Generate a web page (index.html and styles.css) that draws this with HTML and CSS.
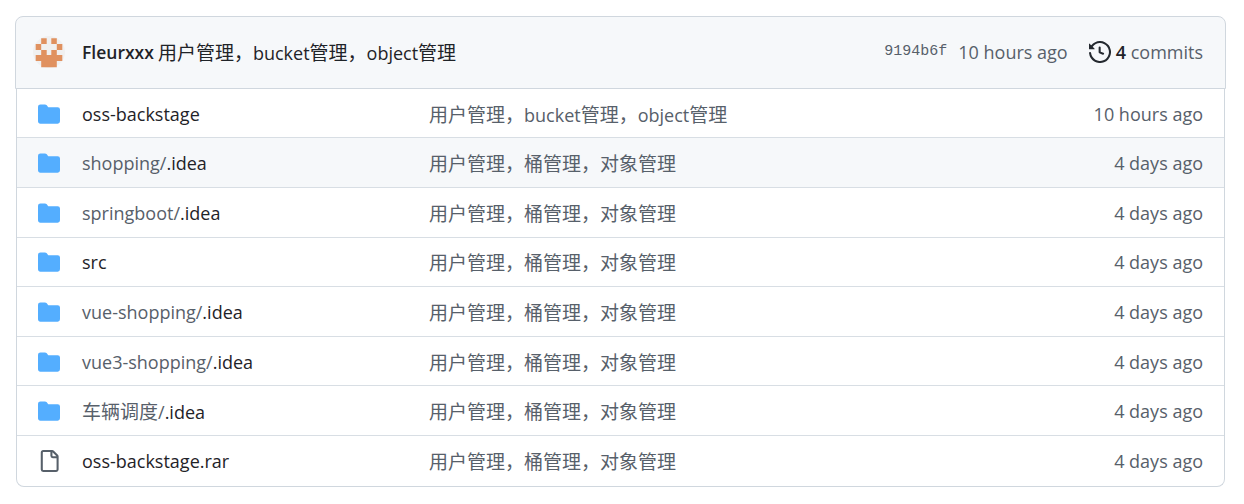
FILE: index.html
```html
<!DOCTYPE html>
<html>
<head>
	<meta charset="utf-8">
	<title>Repositorio</title>
	<link rel="stylesheet" href="styles.css">
</head>
<body>
	<svg class="defs" width="0" height="0">
		<symbol id="folder" viewBox="0 0 16 16"><path d="M1.75 1A1.75 1.75 0 0 0 0 2.75v10.5C0 14.216.784 15 1.75 15h12.5A1.75 1.75 0 0 0 16 13.25v-8.5A1.75 1.75 0 0 0 14.25 3H7.5a.25.25 0 0 1-.2-.1l-.9-1.2C6.07 1.26 5.55 1 5 1H1.75Z"/></symbol>
		<symbol id="file" viewBox="0 0 16 16"><path d="M2 1.75C2 .784 2.784 0 3.75 0h6.586c.464 0 .909.184 1.237.513l2.914 2.914c.329.328.513.773.513 1.237v9.586A1.75 1.75 0 0 1 13.25 16h-9.5A1.75 1.75 0 0 1 2 14.25Zm1.75-.25a.25.25 0 0 0-.25.25v12.5c0 .138.112.25.25.25h9.5a.25.25 0 0 0 .25-.25V6h-2.75A1.75 1.75 0 0 1 9 4.25V1.5Zm6.75.062V4.25c0 .138.112.25.25.25h2.688l-.011-.013-2.914-2.914-.013-.011Z"/></symbol>
	</svg>

	<div class="box">
		<div class="box-header">
			<svg class="avatar" width="32" height="32" viewBox="0 0 32 32">
				<circle cx="16" cy="16" r="16" fill="#f0f0f0"/>
				<path fill="#e0915f" d="M8.2 2.3h5.5v5.8H8.2zM18.3 2.3h5.5v5.8h-5.5zM2.7 8.1h5.5v5.8H2.7zM23.8 8.1h5.5v5.8h-5.5zM8.2 13.9h5.5v5.8H8.2zM18.3 13.9h5.5v5.8h-5.5zM2.7 19h26.6v6H2.7zM8.2 25h15.6v6.2H8.2z"/>
			</svg>
			<a class="author">Fleurxxx</a>
			<span class="message"><span class="zh">用户管理，</span>bucket<span class="zh">管理，</span>object<span class="zh">管理</span></span>
			<code class="sha">9194b6f</code>
			<span class="age">10 hours ago</span>
			<span class="commits">
				<svg width="22" height="22" viewBox="0 0 16 16"><path d="m.427 1.927 1.215 1.215a8.002 8.002 0 1 1-1.6 5.685.75.75 0 1 1 1.493-.154 6.5 6.5 0 1 0 1.18-4.458l1.358 1.358A.25.25 0 0 1 3.896 6H.25A.25.25 0 0 1 0 5.75V2.104a.25.25 0 0 1 .427-.177ZM7.75 4a.75.75 0 0 1 .75.75v2.992l2.028.812a.75.75 0 0 1-.557 1.392l-2.5-1A.751.751 0 0 1 7 8.25v-3.5A.75.75 0 0 1 7.75 4Z"/></svg>
				<span><b>4</b> commits</span>
			</span>
		</div>
		<div class="rows">
			<div class="row">
				<svg class="ico folder"><use href="#folder"/></svg>
				<span class="name">oss-backstage</span>
				<span class="msg"><span class="zh">用户管理，</span>bucket<span class="zh">管理，</span>object<span class="zh">管理</span></span>
				<span class="time">10 hours ago</span>
			</div>
			<div class="row hover">
				<svg class="ico folder"><use href="#folder"/></svg>
				<span class="name"><span class="muted">shopping/</span>.idea</span>
				<span class="msg zh">用户管理，桶管理，对象管理</span>
				<span class="time">4 days ago</span>
			</div>
			<div class="row">
				<svg class="ico folder"><use href="#folder"/></svg>
				<span class="name"><span class="muted">springboot/</span>.idea</span>
				<span class="msg zh">用户管理，桶管理，对象管理</span>
				<span class="time">4 days ago</span>
			</div>
			<div class="row">
				<svg class="ico folder"><use href="#folder"/></svg>
				<span class="name">src</span>
				<span class="msg zh">用户管理，桶管理，对象管理</span>
				<span class="time">4 days ago</span>
			</div>
			<div class="row">
				<svg class="ico folder"><use href="#folder"/></svg>
				<span class="name"><span class="muted">vue-shopping/</span>.idea</span>
				<span class="msg zh">用户管理，桶管理，对象管理</span>
				<span class="time">4 days ago</span>
			</div>
			<div class="row">
				<svg class="ico folder"><use href="#folder"/></svg>
				<span class="name"><span class="muted">vue3-shopping/</span>.idea</span>
				<span class="msg zh">用户管理，桶管理，对象管理</span>
				<span class="time">4 days ago</span>
			</div>
			<div class="row">
				<svg class="ico folder"><use href="#folder"/></svg>
				<span class="name"><span class="muted"><span class="zh">车辆调度</span>/</span>.idea</span>
				<span class="msg zh">用户管理，桶管理，对象管理</span>
				<span class="time">4 days ago</span>
			</div>
			<div class="row">
				<svg class="ico file"><use href="#file"/></svg>
				<span class="name">oss-backstage.rar</span>
				<span class="msg zh">用户管理，桶管理，对象管理</span>
				<span class="time">4 days ago</span>
			</div>
		</div>
	</div>
</body>
</html>
```
FILE: styles.css
```css
body{
	margin: 0;
	padding: 16px 18px 17px 15px;
	background: #fff;
	font-family: 'Open Sans', 'Noto Sans CJK SC', sans-serif;
	font-size: 18px;
	color: #1f2328;
}
.defs{
	display: block;
}
.zh{
	font-size: 19px;
}
/*--------Cabecera-----------*/
.box-header{
	display: flex;
	align-items: center;
	height: 73px;
	box-sizing: border-box;
	padding: 0 22px 2px 17px;
	background: #f6f8fa;
	border: 1px solid #d0d7de;
	border-radius: 8px 8px 0 0;
}
.avatar{
	margin-right: 17px;
}
.author{
	font-weight: 600;
	font-size: 17.5px;
	margin-right: 4px;
}
.message{
	flex: 1;
}
.sha{
	font-family: 'Liberation Mono', monospace;
	font-size: 15px;
	color: #57606a;
	margin-right: 11px;
}
.age{
	color: #57606a;
}
.commits{
	display: flex;
	align-items: center;
	gap: 5px;
	margin-left: 21px;
	color: #57606a;
}
.commits svg{
	fill: #24292f;
}
.commits b{
	color: #1f2328;
	font-weight: 600;
}
/*--------Filas-----------*/
.rows{
	margin: 0 1px;
	border: 1px solid #d0d7de;
	border-top: 0;
	border-radius: 0 0 8px 8px;
	overflow: hidden;
}
.row{
	display: grid;
	grid-template-columns: 22px 347px 1fr auto;
	column-gap: 22px;
	align-items: center;
	height: 49.6px;
	box-sizing: border-box;
	padding: 1px 21px 0;
	border-top: 1px solid #d8dee4;
}
.row:first-child{
	height: 48.4px;
	padding-top: 2px;
	border-top: 0;
}
.row:last-child{
	height: 51px;
	padding-top: 0;
}
.hover{
	background: #f6f8fa;
}
.ico{
	width: 22px;
	height: 22px;
}
.folder{
	fill: #54aeff;
}
.file{
	fill: #57606a;
}
.name{
	white-space: nowrap;
}
.muted{
	color: #57606a;
}
.msg,.time{
	color: #57606a;
	white-space: nowrap;
}
.msg{
	margin-left: -22px;
}
```
